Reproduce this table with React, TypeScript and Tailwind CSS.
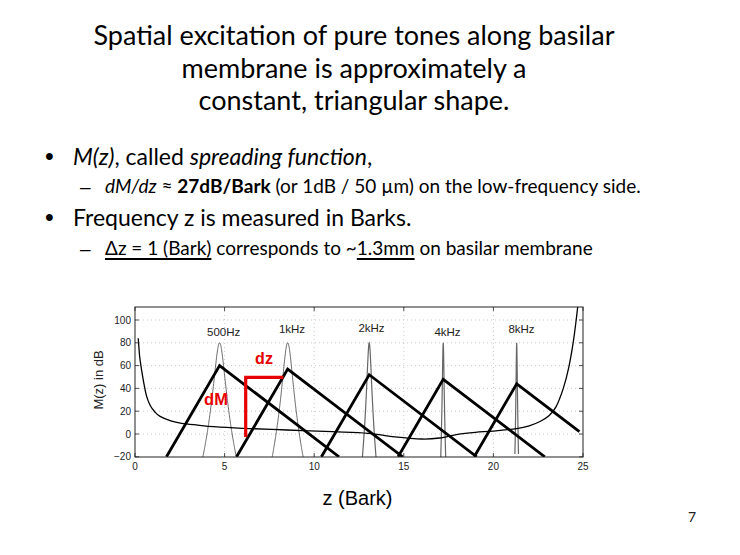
const X = (z: number) => 135 + z * 17.92;
const Y = (db: number) => 434 - db * 1.14;

type Pt = [number, number];

// catmull-rom through the points, turned into cubic beziers
function smooth(pts: Pt[]) {
  let d = `M${pts[0][0].toFixed(2)},${pts[0][1].toFixed(2)}`;
  for (let i = 0; i < pts.length - 1; i++) {
    const p0 = pts[i - 1] || pts[i];
    const p1 = pts[i];
    const p2 = pts[i + 1];
    const p3 = pts[i + 2] || p2;
    const c1x = p1[0] + (p2[0] - p0[0]) / 6;
    const c1y = p1[1] + (p2[1] - p0[1]) / 6;
    const c2x = p2[0] - (p3[0] - p1[0]) / 6;
    const c2y = p2[1] - (p3[1] - p1[1]) / 6;
    d += ` C${c1x.toFixed(2)},${c1y.toFixed(2)} ${c2x.toFixed(2)},${c2y.toFixed(2)} ${p2[0].toFixed(2)},${p2[1].toFixed(2)}`;
  }
  return d;
}

const threshold: Pt[] = [
  [0.18, 84], [0.26, 68], [0.37, 56], [0.5, 44], [0.65, 33], [0.85, 25], [1.1, 19.5],
  [1.4, 15.5], [2.0, 11.5], [2.6, 9.4], [3.5, 7.8], [4.4, 6.4], [6, 5], [8.5, 3.5],
  [11, 2], [13, 0.6], [14.5, -2.5], [16, -4.4], [17, -3.5], [18, -0.3], [19, 1.5],
  [20, 2.6], [21.3, 4.8], [22, 7.2], [22.6, 11], [23.1, 16], [23.5, 24], [23.9, 40],
  [24.2, 58], [24.45, 80], [24.62, 100], [24.75, 118],
].map(([z, db]) => [X(z), Y(db)] as Pt);

const peaks = [
  { z: 4.72, m: 60, label: "500Hz", lx: 223.7, ly: 335.5, w: 0.27, thin: true },
  { z: 8.52, m: 57, label: "1kHz", lx: 292, ly: 333, w: 0.25, thin: true },
  { z: 13.07, m: 52, label: "2kHz", lx: 371.5, ly: 332, w: 0.11, thin: false },
  { z: 17.2, m: 48, label: "4kHz", lx: 447.5, ly: 335.5, w: 0.04, thin: false },
  { z: 21.3, m: 44, label: "8kHz", lx: 521.5, ly: 333, w: 0.03, thin: false },
];

function tuning(z0: number, w: number) {
  const pts: string[] = [];
  for (let d = -1.6; d <= 1.6001; d += 0.01) {
    const db = 80 - 90 * Math.log10(1 + (d / w) * (d / w));
    if (db < -24) continue;
    pts.push(`${X(z0 + d).toFixed(2)},${Y(db).toFixed(2)}`);
  }
  return pts.join(" ");
}

function triangle(z: number, m: number, last: boolean) {
  const left: Pt = [X(z - (m + 20) / 27), Y(-20)];
  const right: Pt = last ? [X(24.8), Y(m - (24.8 - z) * 12)] : [X(z + (m + 20) / 12), Y(-20)];
  return `${left[0]},${left[1]} ${X(z)},${Y(m)} ${right[0]},${right[1]}`;
}

function Chart() {
  const yTicks = [-20, 0, 20, 40, 60, 80, 100];
  const xTicks = [0, 5, 10, 15, 20, 25];
  const font = "'Liberation Sans', Arial, sans-serif";
  return (
    <svg viewBox="80 300 520 210" width={520} height={210} className="block ml-[80px]">
      <defs>
        <clipPath id="plot">
          <rect x={135} y={307} width={448} height={150} />
        </clipPath>
      </defs>

      {/* grid */}
      {[0, 20, 40, 60, 80, 100].map((v) => (
        <line key={v} x1={135} x2={583} y1={Y(v)} y2={Y(v)} stroke="#bdbdbd" strokeWidth={0.8} strokeDasharray="1 3" />
      ))}
      {[5, 10, 15, 20].map((v) => (
        <line key={v} x1={X(v)} x2={X(v)} y1={307} y2={457} stroke="#bdbdbd" strokeWidth={0.8} strokeDasharray="1 3" />
      ))}

      <g clipPath="url(#plot)">
        {peaks.map((p) => (
          <polyline
            key={p.label}
            points={tuning(p.z, p.w)}
            fill="none"
            stroke={p.thin ? "#444" : "#666"}
            strokeWidth={p.thin ? 0.8 : 1.2}
          />
        ))}
        <path d={smooth(threshold)} fill="none" stroke="#000" strokeWidth={1.3} />
        {peaks.map((p, i) => (
          <polyline key={p.label} points={triangle(p.z, p.m, i === peaks.length - 1)} fill="none" stroke="#000" strokeWidth={2.8} />
        ))}
      </g>

      {/* frame and ticks */}
      <rect x={135} y={307} width={448} height={150} fill="none" stroke="#222" strokeWidth={1} />
      {yTicks.map((v) => (
        <g key={v}>
          <line x1={135} x2={139} y1={Y(v)} y2={Y(v)} stroke="#222" strokeWidth={0.8} />
          <line x1={579} x2={583} y1={Y(v)} y2={Y(v)} stroke="#222" strokeWidth={0.8} />
          <text x={131} y={Y(v) + 3.6} textAnchor="end" fontSize={10} fontFamily={font} fill="#222">
            {v < 0 ? `\u2212${-v}` : v}
          </text>
        </g>
      ))}
      {xTicks.map((v) => (
        <g key={v}>
          <line x1={X(v)} x2={X(v)} y1={453} y2={457} stroke="#222" strokeWidth={0.8} />
          <line x1={X(v)} x2={X(v)} y1={307} y2={311} stroke="#222" strokeWidth={0.8} />
          <text x={X(v)} y={469.5} textAnchor="middle" fontSize={10} fontFamily={font} fill="#222">
            {v}
          </text>
        </g>
      ))}

      {peaks.map((p) => (
        <text key={p.label} x={p.lx} y={p.ly} textAnchor="middle" fontSize={11.5} fontFamily={font} fill="#222">
          {p.label}
        </text>
      ))}

      {/* dz / dM marker */}
      <polyline points="245.7,437 245.7,377.3 283.5,377.3" fill="none" stroke="#e60000" strokeWidth={3.2} />
      <text x={264} y={364} textAnchor="middle" fontSize={16} fontWeight="bold" fontFamily={font} fill="#e60000">
        dz
      </text>
      <text x={216} y={405} textAnchor="middle" fontSize={16.5} fontWeight="bold" fontFamily={font} fill="#e60000">
        dM
      </text>

      <text transform="translate(102.6 380) rotate(-90)" textAnchor="middle" fontSize={13} fontFamily={font} fill="#222">
        M(z) in dB
      </text>
      <text x={357.5} y={505} textAnchor="middle" fontSize={20} fontFamily={font} fill="#000">
        z (Bark)
      </text>
    </svg>
  );
}

export default function App() {
  return (
    <div className="w-[740px] h-[555px] bg-white text-black font-['Lato',sans-serif] overflow-hidden">
      <div className="ml-[36px] w-[636px] pt-[19px] text-center text-[27px] leading-[32.5px]">
        <div>Spatial excitation of pure tones along basilar</div>
        <div>membrane is approximately a</div>
        <div>constant, triangular shape.</div>
      </div>

      <div className="mt-[24.5px]">
        <div className="h-[30px] pl-[45px] text-[23px] leading-[30px] whitespace-nowrap">
          <span className="inline-block w-[28px] text-[25px] font-['Liberation_Sans',sans-serif]">•</span>
          <i>M(z)</i>, called <i>spreading function</i>,
        </div>
        <div className="h-[31px] pl-[80px] text-[19px] leading-[30px] whitespace-nowrap">
          <span className="inline-block w-[25px] font-['Liberation_Sans',sans-serif]">–</span>
          <i>dM/dz</i> ≈ <b>27dB/Bark</b> (or 1dB / 50 µm) on the low-frequency side.
        </div>
        <div className="h-[30.5px] pl-[45px] text-[23px] leading-[30px] whitespace-nowrap">
          <span className="inline-block w-[28px] text-[25px] font-['Liberation_Sans',sans-serif]">•</span>
          Frequency z is measured in Barks.
        </div>
        <div className="h-[30px] pl-[80px] text-[19px] leading-[30px] whitespace-nowrap">
          <span className="inline-block w-[25px] font-['Liberation_Sans',sans-serif]">–</span>
          <span className="underline decoration-2 underline-offset-[3px]">Δz = 1 (Bark)</span> corresponds to ~
          <span className="underline decoration-2 underline-offset-[3px]">1.3mm</span> on basilar membrane
        </div>
      </div>

      <div className="mt-[37.5px]">
        <Chart />
      </div>

      <div className="flex justify-end pr-[44px] text-[14px] leading-[14px] text-[#222]">7</div>
    </div>
  );
}
